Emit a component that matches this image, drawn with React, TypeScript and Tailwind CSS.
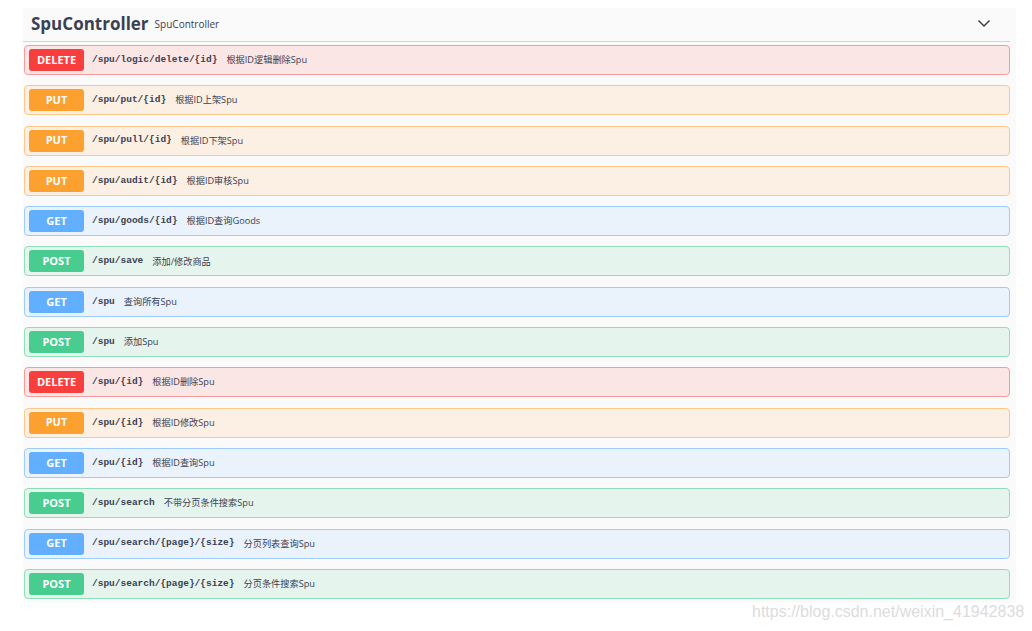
import React from 'react';

type Method = 'DELETE' | 'PUT' | 'GET' | 'POST';

const styles: Record<Method, { row: string; badge: string }> = {
  DELETE: { row: 'bg-[#fbe6e6] border-[#f59b9b]', badge: 'bg-[#f93e3e]' },
  PUT: { row: 'bg-[#fcefe3] border-[#fbc88c]', badge: 'bg-[#fca130]' },
  GET: { row: 'bg-[#eaf2fb] border-[#9fcbf8]', badge: 'bg-[#61affe]' },
  POST: { row: 'bg-[#e5f5ee] border-[#8fddb9]', badge: 'bg-[#49cc90]' },
};

const ops: { method: Method; path: string; desc: string }[] = [
  { method: 'DELETE', path: '/spu/logic/delete/{id}', desc: '根据ID逻辑删除Spu' },
  { method: 'PUT', path: '/spu/put/{id}', desc: '根据ID上架Spu' },
  { method: 'PUT', path: '/spu/pull/{id}', desc: '根据ID下架Spu' },
  { method: 'PUT', path: '/spu/audit/{id}', desc: '根据ID审核Spu' },
  { method: 'GET', path: '/spu/goods/{id}', desc: '根据ID查询Goods' },
  { method: 'POST', path: '/spu/save', desc: '添加/修改商品' },
  { method: 'GET', path: '/spu', desc: '查询所有Spu' },
  { method: 'POST', path: '/spu', desc: '添加Spu' },
  { method: 'DELETE', path: '/spu/{id}', desc: '根据ID删除Spu' },
  { method: 'PUT', path: '/spu/{id}', desc: '根据ID修改Spu' },
  { method: 'GET', path: '/spu/{id}', desc: '根据ID查询Spu' },
  { method: 'POST', path: '/spu/search', desc: '不带分页条件搜索Spu' },
  { method: 'GET', path: '/spu/search/{page}/{size}', desc: '分页列表查询Spu' },
  { method: 'POST', path: '/spu/search/{page}/{size}', desc: '分页条件搜索Spu' },
];

export default function App() {
  return (
    <div className="relative w-[1032px] h-[631px] bg-white overflow-hidden" style={{ fontFamily: '"Open Sans", "Noto Sans CJK SC", sans-serif' }}>
      <div className="ml-[23px] mt-[8px] w-[993px] bg-[#fafafa] pb-[4px]">
        {/* header */}
        <div className="h-[34px] flex items-center border-b border-[#d5d5d7] mr-[6px]">
          <span className="ml-[8px] text-[17px] font-bold text-[#3b4151] leading-none mb-[3px]">SpuController</span>
          <span className="ml-[6px] text-[10px] text-[#3b4151] mb-[1px]">SpuController</span>
          <svg className="ml-auto mr-[19px] mb-[2px]" width="14" height="9" viewBox="0 0 14 9" fill="none">
            <path d="M1.5 1.5 L7 7 L12.5 1.5" stroke="#333" strokeWidth="1.3" />
          </svg>
        </div>

        <div className="flex flex-col gap-[10.3px] mt-[3px] ml-[1px] mr-[6px]">
          {ops.map((op, i) => (
            <div key={i} className={`h-[30px] flex items-center border rounded-[4px] ${styles[op.method].row}`}>
              <div className={`ml-[4px] w-[55px] h-[22px] rounded-[3px] flex items-center justify-center text-white text-[11px] font-bold ${styles[op.method].badge}`}>
                {op.method}
              </div>
              <span className="ml-[8px] text-[9.5px] font-bold text-[#3b4151]" style={{ fontFamily: '"Liberation Mono", monospace' }}>
                {op.path}
              </span>
              <span className="ml-[9px] text-[9.2px] text-[#3b4151]" style={{ fontFamily: '"Open Sans", "Noto Sans CJK SC", sans-serif' }}>
                {op.desc}
              </span>
            </div>
          ))}
        </div>
      </div>

      <div className="absolute left-[752px] top-[600px] text-[16px] text-[#dcdcdc]" style={{ fontFamily: '"Liberation Sans", Arial, sans-serif' }}>
        https://blog.csdn.net/weixin_41942838
      </div>
    </div>
  );
}
